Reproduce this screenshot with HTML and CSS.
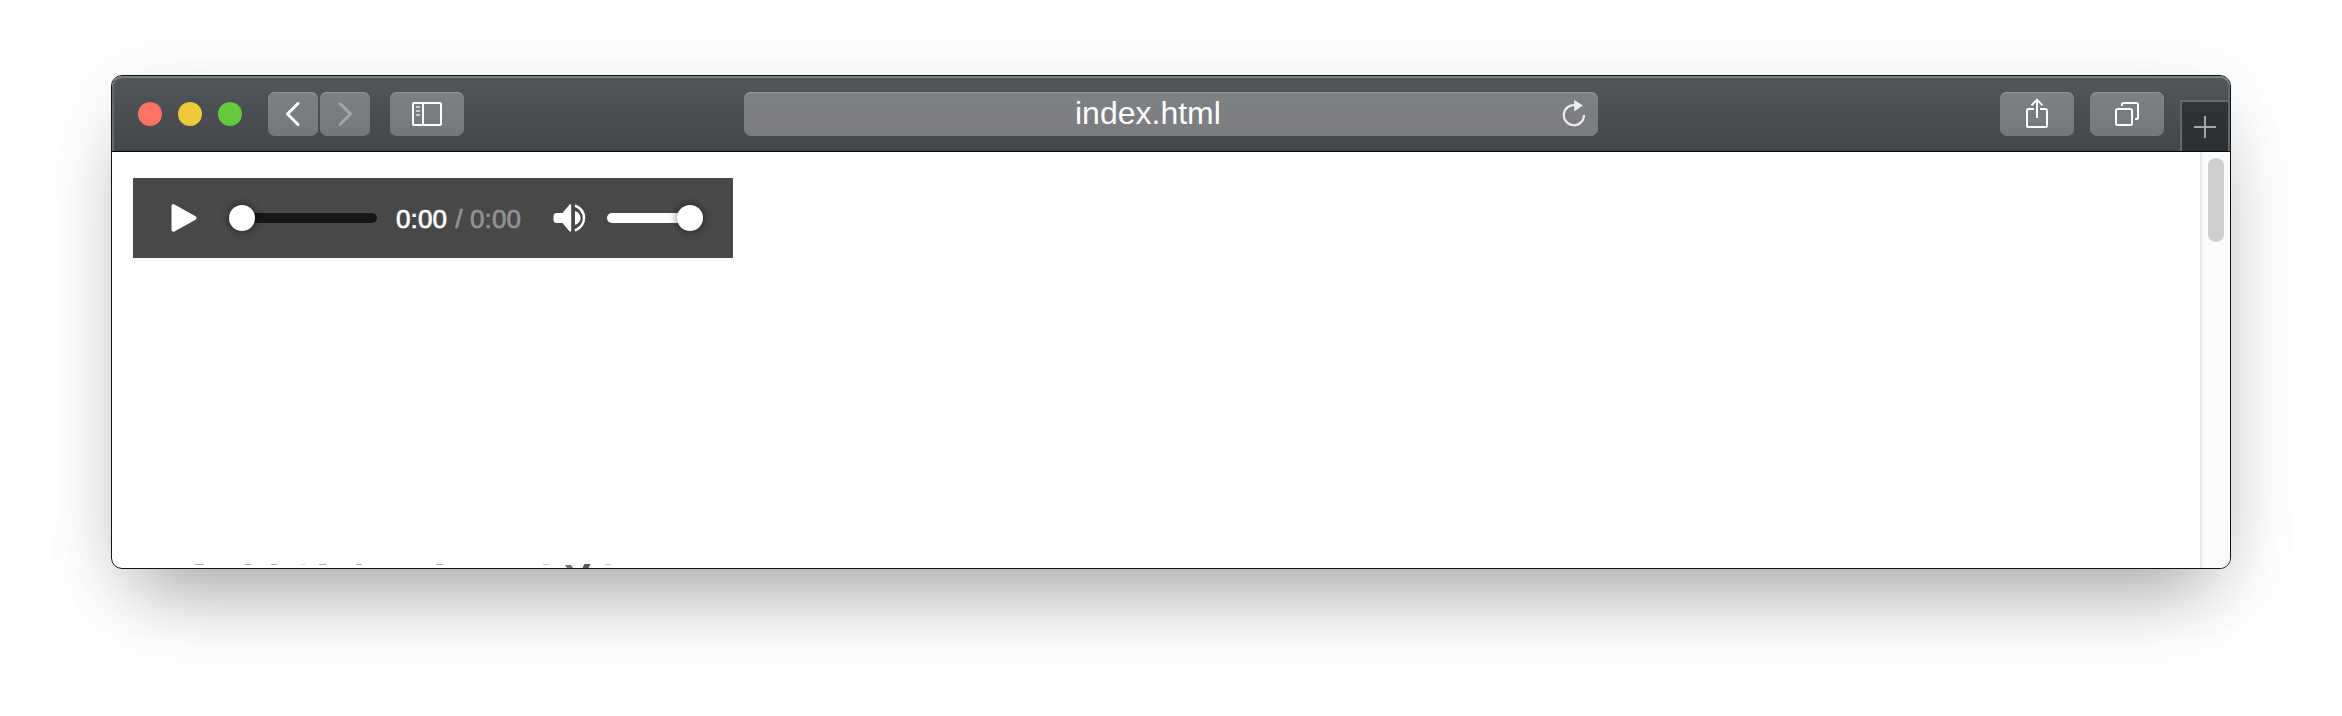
FILE: index.html
```html
<!DOCTYPE html>
<html lang="en">
<head>
<meta charset="utf-8">
<title>index.html</title>
<link rel="stylesheet" href="styles.css">
</head>
<body>
<main class="window">
  <header class="toolbar">
    <div class="lights"><span class="light red"></span><span class="light yellow"></span><span class="light green"></span></div>
    <div class="nav">
      <button class="btn narrow" aria-label="Back"><svg width="50" height="44" fill="none" stroke="#fff" stroke-width="3" stroke-linecap="round" stroke-linejoin="round"><path d="M30 11.5 19.5 22 30 32.5"/></svg></button>
      <button class="btn narrow" aria-label="Forward"><svg width="50" height="44" fill="none" stroke="#a3a5a8" stroke-width="3" stroke-linecap="round" stroke-linejoin="round"><path d="M20 11.5 30.5 22 20 32.5"/></svg></button>
    </div>
    <button class="btn" aria-label="Sidebar"><svg width="74" height="44" fill="none" stroke="#fff" stroke-width="2"><rect x="23" y="11" width="28" height="22" rx="1"/><path d="M33 11v22"/><path stroke="#c9cbcc" d="M26 15h4M26 19h4M26 23h4"/></svg></button>
    <div class="address"><span>index.html</span>
      <svg class="reload" width="26" height="30"><path fill="none" stroke="#ededed" stroke-width="2.2" d="M13.5 5.2A10.1 10.1 0 1 0 22 15"/><path fill="#ededed" d="M12.2 0v11.4L21 5.6z"/></svg>
    </div>
    <div class="actions">
      <button class="btn" aria-label="Share"><svg width="74" height="44" fill="none" stroke="#fff" stroke-width="2"><path d="M34 17h-5.4q-1.6 0-1.6 1.6v14.8q0 1.6 1.6 1.6h16.8q1.6 0 1.6-1.6V18.6q0-1.6-1.6-1.6H40M37 26V8M31.5 13.4 37 7.6l5.5 5.8"/></svg></button>
      <button class="btn" aria-label="Tabs"><svg width="74" height="44" fill="none" stroke="#fff" stroke-width="2"><rect x="26" y="17" width="16" height="16" rx="1.5"/><path d="M32 14v-1.5q0-1.5 1.5-1.5h13q1.5 0 1.5 1.5v13q0 1.5-1.5 1.5H45"/></svg></button>
    </div>
    <button class="newtab" aria-label="New tab"><svg width="46" height="48" fill="none" stroke="#a4a7a9" stroke-width="2"><path d="M12 25h22M23 14v22"/></svg></button>
  </header>
  <section class="viewport">
    <div class="page">
      <div class="player">
        <svg class="play" width="28" height="30"><path fill="#fff" stroke="#fff" stroke-width="4" stroke-linejoin="round" d="M2.5 3.2v23.6L23.5 15z"/></svg>
        <div class="slider progress"><span class="thumb"></span></div>
        <div class="time"><span>0:00</span><span class="total">/ 0:00</span></div>
        <svg class="speaker" width="34" height="30" fill="#fff"><path d="M4 10h5.5L16 2.2Q18-.4 18.200 3v24q-.2 3.200-2.200.8L9.500 20H4q-3.500-.2-3.500-3v-4q0-3 3.500-3z"/><path d="M22 8q5.500 2 5.500 7T22 22z"/><path fill="none" stroke="#fff" stroke-width="2.5" d="M22 2.5q9 4 9 12.500t-9 12.500"/></svg>
        <div class="slider volume"><span class="thumb"></span></div>
      </div>
      <svg class="cut" width="430" height="5" viewBox="190 563 430 5" fill="#a9adb5"><path d="M195 564h9v1h-9zM245 564h6v1h-6zM271 564h6v1h-6zM319 564h7v1h-7zM356 564h6v1h-6zM436 564h7v1h-7z"/><path fill="#dcdee0" d="M301 564h5v1h-5z"/><path fill="#c3c6ca" d="M543 564h6v1h-6zM605 564h6v1h-6z"/><path fill="#6c737f" d="M565 565h6l2 3h-6z"/><path fill="#505866" d="M584.500 564h6l-2 4h-6z"/></svg>
    </div>
    <div class="scrollbar"><div class="handle"></div></div>
  </section>
</main>
</body>
</html>
```
FILE: styles.css
```css
* { box-sizing: border-box; }
body { margin: 0; height: 716px; padding: 75px 111px; background: #fff; font-family: "Liberation Sans", Arial, sans-serif; overflow: hidden; }
svg { display: block; flex: none; }
button { border: 0; padding: 0; font: inherit; }
.window { width: 2120px; height: 494px; border: 1px solid #111416; border-radius: 11px; overflow: hidden; box-shadow: 0 46px 76px -26px rgba(0,0,0,.33), 0 8px 80px rgba(0,0,0,.08); background: #fff; display: flex; flex-direction: column; }
.toolbar { height: 76px; flex: none; display: flex; align-items: flex-start; padding: 16px 0 0 26px; background: linear-gradient(#515759, #434649); border-bottom: 1px solid #050607; border-radius: 10px 10px 0 0; box-shadow: inset 0 2px 0 #7d8182, inset 2px 0 0 #65696b, inset -2px 0 0 #65696b; }
.lights { display: flex; gap: 16px; padding-top: 10px; margin-right: 26px; }
.light { width: 24px; height: 24px; border-radius: 50%; }
.red { background: #ff7264; }
.yellow { background: #edca3a; }
.green { background: #64c93b; }
.nav { display: flex; gap: 2px; margin-right: 20px; }
.btn { width: 74px; height: 44px; border-radius: 7px; background: linear-gradient(#7e8183, #75787b); box-shadow: inset 0 1px 0 #929597; }
.narrow { width: 50px; }
.address { width: 854px; height: 44px; margin-left: 280px; padding-left: 331px; border-radius: 7px; background: linear-gradient(#7e8184, #7b7c80); box-shadow: inset 0 1px 0 #969899; color: #fff; font-size: 32px; line-height: 43px; display: flex; justify-content: space-between; }
.reload { margin: 8px 10px 0 0; }
.actions { display: flex; gap: 16px; margin-left: 402px; }
.newtab { width: 50px; height: 51px; margin: 8px 0 0 16px; border: solid #65696b; border-width: 2px 2px 0; background: linear-gradient(#323538, #2d3033); display: flex; align-items: flex-start; }
.viewport { flex: 1; display: flex; min-height: 0; }
.page { flex: 1; padding: 26px 0 0 21px; display: flex; flex-direction: column; justify-content: space-between; }
.player { width: 600px; height: 80px; padding-left: 38px; background: #484848; display: flex; align-items: center; }
.slider { height: 10px; border-radius: 5px; display: flex; align-items: center; }
.thumb { width: 26px; height: 26px; flex: none; border-radius: 50%; background: #fff; box-shadow: 0 0 8px rgba(0,0,0,.55); }
.progress { width: 148px; margin-left: 30px; background: #161616; }
.time { width: 125px; margin-left: 19px; padding-top: 1px; display: flex; gap: 8px; font-size: 26px; line-height: 30px; letter-spacing: .15px; color: #fff; white-space: nowrap; -webkit-text-stroke: .7px currentColor; }
.total { color: #929292; }
.speaker { margin-left: 32px; }
.volume { width: 96px; margin-left: 20px; background: #fff; justify-content: flex-end; }
.cut { margin-left: 57px; }
.scrollbar { width: 30px; border-left: 2px solid #ebebeb; background: #fafafa; padding: 6px 0 0 6px; }
.handle { width: 16px; height: 84px; border-radius: 8px; background: #cdcdcd; }
```
